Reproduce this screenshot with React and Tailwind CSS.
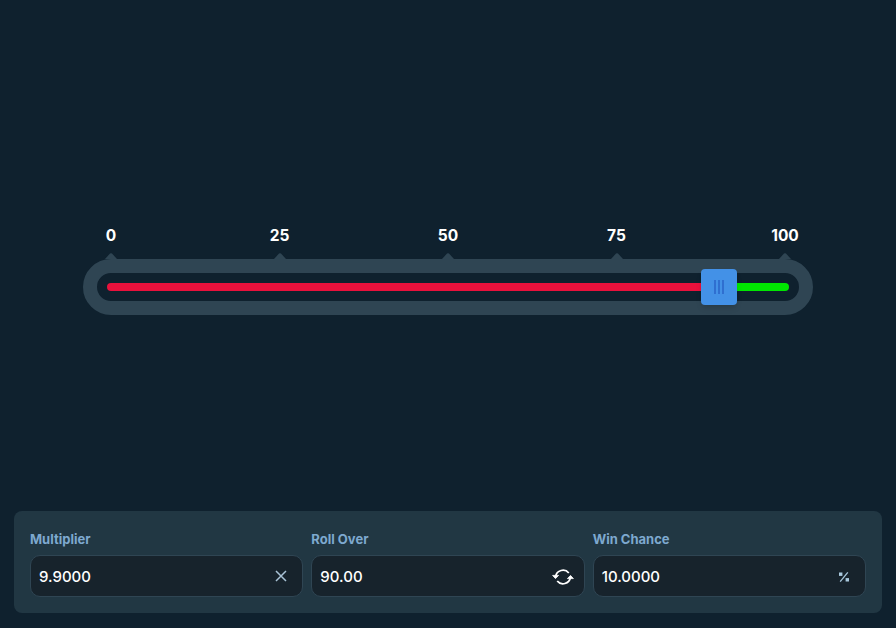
import React from "react";

const ticks = ["0", "25", "50", "75", "100"];

function Field({ label, value, children }) {
  return (
    <div className="flex flex-col gap-[6px] min-w-0">
      <label className="h-[20px] leading-[20px] text-[13px] font-bold text-[#7ea9cf]">{label}</label>
      <div className="h-[42px] rounded-[10px] border border-[#2f4553] bg-[#17232c] flex items-center justify-between pl-[8px] pr-[12px]">
        <span className="text-[15px] leading-[20px] pt-[2px] font-medium text-white">{value}</span>
        {children}
      </div>
    </div>
  );
}

export default function App() {
  return (
    <div className="w-[896px] h-[628px] bg-[#0f212e] flex flex-col overflow-hidden" style={{ fontFamily: "Inter, 'Noto Sans', sans-serif" }}>
      <div className="pt-[226px] px-[83px]">
        <div className="flex justify-between px-[28px] h-[20px]">
          {ticks.map((t) => (
            <div key={t} className="w-0 flex justify-center">
              <span className="text-[15.5px] leading-[20px] font-bold text-white">{t}</span>
            </div>
          ))}
        </div>
        <div className="flex justify-between px-[28px] h-[13px] items-end">
          {ticks.map((t) => (
            <div key={t} className="w-0 flex justify-center">
              <svg width="12" height="6" viewBox="0 0 12 6" className="shrink-0 block">
                <path d="M0 6 L5 0.5 Q6 -0.2 7 0.5 L12 6 Z" fill="#2f4553" />
              </svg>
            </div>
          ))}
        </div>
        <div className="h-[56px] rounded-[28px] bg-[#0f212e] border-[14px] border-[#2f4553] flex items-center px-[10px]">
          <div className="relative flex-1 h-[8px] flex rounded-full">
            <div className="h-full w-[612px] bg-[#e9113c] rounded-l-full" />
            <div className="h-full flex-1 bg-[#00e701] rounded-r-full" />
            <div className="absolute left-[594px] top-[-14px] w-[36px] h-[36px] rounded-[4px] bg-[#4391e7] flex items-center justify-center gap-[2px] shadow-md">
              <span className="w-[2px] h-[14px] bg-[#2f6fd0]" />
              <span className="w-[2px] h-[14px] bg-[#2f6fd0]" />
              <span className="w-[2px] h-[14px] bg-[#2f6fd0]" />
            </div>
          </div>
        </div>
      </div>

      <div className="mt-auto mx-[14px] mb-[15px] h-[102px] rounded-[8px] bg-[#213743] px-[16px] pt-[18px] grid grid-cols-3 gap-x-[8px]">
        <Field label="Multiplier" value="9.9000">
          <svg width="14" height="14" viewBox="0 0 14 14" className="mr-[2px]" fill="none" stroke="#a9c3d6" strokeWidth="1.5">
            <path d="M2 2 L12 12 M12 2 L2 12" />
          </svg>
        </Field>
        <Field label="Roll Over" value="90.00">
          <svg width="22" height="20" viewBox="0 0 22 20" className="mr-[-2px] mt-[1px]" fill="none" stroke="#ffffff" strokeWidth="1.8">
            <path d="M3.6 9.5 A7.5 7.5 0 0 1 16.8 6" />
            <path d="M18.4 10.5 A7.5 7.5 0 0 1 5.2 14" />
            <path d="M0.6 8.4 L3.5 11.6 L6.6 8.4 Z" fill="#ffffff" strokeWidth="0.8" />
            <path d="M15.4 11.6 L18.5 8.4 L21.4 11.6 Z" fill="#ffffff" strokeWidth="0.8" />
          </svg>
        </Field>
        <Field label="Win Chance" value="10.0000">
          <svg width="12" height="12" viewBox="0 0 12 12" className="mr-[3px] mt-[1px]" fill="#a9c9de">
            <rect x="1" y="1.5" width="3.4" height="3.4" />
            <rect x="7.6" y="7.1" width="3.4" height="3.4" />
            <path d="M9.8 1.4 L2.2 10.6" stroke="#a9c9de" strokeWidth="1.3" />
          </svg>
        </Field>
      </div>
    </div>
  );
}
